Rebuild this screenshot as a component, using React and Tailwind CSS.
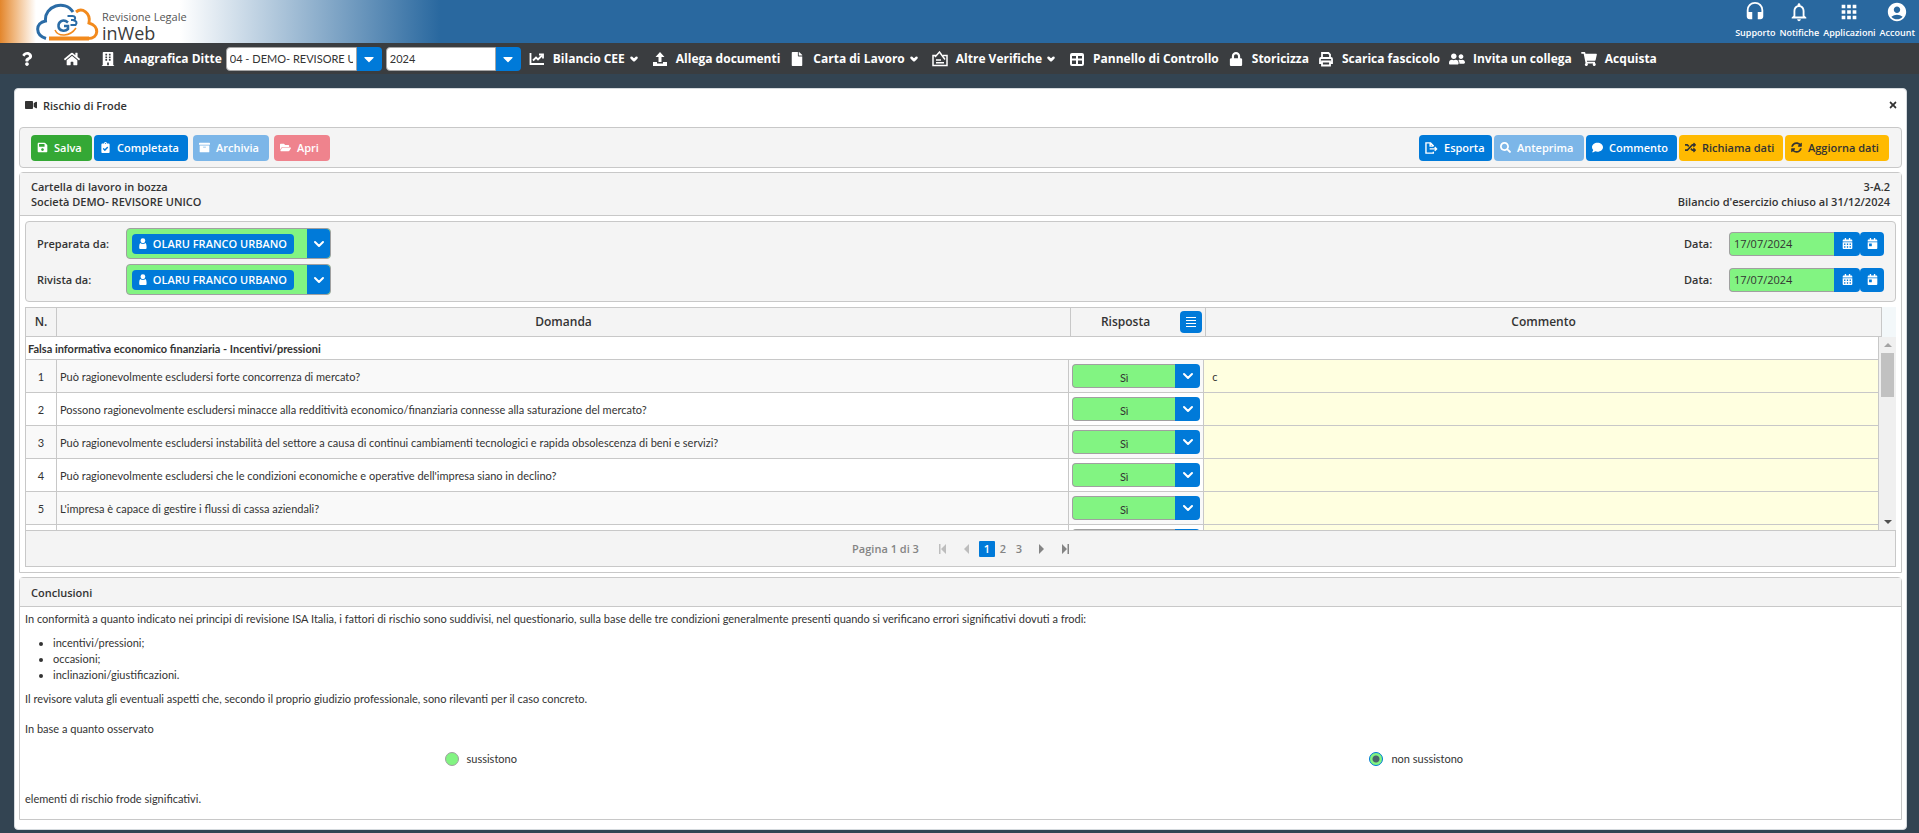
import { useState } from 'react';
import clsx from 'clsx';
import {
  FaArchive, FaBuilding, FaCalendarAlt, FaCalendarDay, FaCaretDown, FaClipboardCheck, FaComment, FaFile, FaFolderOpen,
  FaHome, FaLock, FaQuestion, FaRandom, FaSave, FaSearch, FaShoppingCart, FaSyncAlt, FaTimes, FaUserFriends, FaVideo,
} from 'react-icons/fa';
import { MdAccountCircle, MdApps, MdHeadset, MdNotificationsNone } from 'react-icons/md';
import { ChevronDown } from 'lucide-react';

const questions = [
  { n: 1, text: 'Può ragionevolmente escludersi forte concorrenza di mercato?', comment: 'c' },
  { n: 2, text: 'Possono ragionevolmente escludersi minacce alla redditività economico/finanziaria connesse alla saturazione del mercato?' },
  { n: 3, text: 'Può ragionevolmente escludersi instabilità del settore a causa di continui cambiamenti tecnologici e rapida obsolescenza di beni e servizi?' },
  { n: 4, text: "Può ragionevolmente escludersi che le condizioni economiche e operative dell'impresa siano in declino?" },
  { n: 5, text: "L'impresa è capace di gestire i flussi di cassa aziendali?" },
  { n: '', text: '' },
];

const Logo = () => (
  <svg viewBox="0 0 64 38" className="h-[38px] w-16" fill="none" strokeWidth="3">
    <path d="M10 35.500C-1 32 -1 20 9.500 18C8 3 29 -4 37 9" stroke="#2b6ca6" />
    <path d="M40 9C46 4 55 10 53 20C64 23 63 35.500 52 35.500" stroke="#f28a1d" />
    <path d="M13 35.500H53" stroke="#f28a1d" strokeWidth="4" />
    <path d="M19 27C22 34 34 34 40 25" stroke="#f28a1d" strokeWidth="1.500" />
    <path d="M32 19.500C27 15 22 19 22.500 23.500C23 28 29 29 32 26V23H28" stroke="#2b6ca6" strokeWidth="2.500" />
    <path d="M31.500 13H36.500Q40.500 13.500 38.500 17H35M37 17Q42.500 18.500 39.500 22H34.500" stroke="#2b6ca6" strokeWidth="2" />
  </svg>
);

const ChartIcon = ({ className }) => (
  <svg viewBox="0 0 16 16" className={className} fill="none" stroke="currentColor" strokeWidth="1.800">
    <path d="M1.500 2V13H15" />
    <path d="M4 9.500L7 6.500L9 8.500L13 4.500" />
    <path d="M10 3.500H14V7.500" />
  </svg>
);

const UploadIcon = ({ className }) => (
  <svg viewBox="0 0 16 16" className={className} fill="currentColor">
    <path d="M8 1L12.500 6H9.500V11H6.500V6H3.500Z" />
    <path d="M1 11H5V12.500H11V11H15V15H1Z" />
  </svg>
);

const BadgeIcon = ({ className }) => (
  <svg viewBox="0 0 16 16" className={className} fill="none" stroke="currentColor" strokeWidth="1.500">
    <path d="M4 4.500H1V14.500H15V4.500H11" />
    <path d="M3 6L7.500 1L13 8.500" />
    <path d="M4 9H9M4 11.800H12" />
  </svg>
);

const PanelIcon = ({ className }) => (
  <svg viewBox="0 0 16 16" className={className} fill="none" stroke="currentColor" strokeWidth="2">
    <rect x="2" y="3" width="12" height="11" rx="1" />
    <path d="M8 3V14M2 8.500H14M2 4H14" />
  </svg>
);

const PrintIcon = ({ className }) => (
  <svg viewBox="0 0 16 16" className={className} fill="none" stroke="currentColor" strokeWidth="1.800">
    <path d="M4 7V2H10.500L12 3.500V7" />
    <path d="M4 12H2V8Q2 7 3 7H13Q14 7 14 8V12H12" />
    <path d="M4 10.500H12V14.500H4Z" />
  </svg>
);

const ExportIcon = ({ className }) => (
  <svg viewBox="0 0 14 13" className={className} fill="none" stroke="currentColor" strokeWidth="1.500">
    <path d="M9 4.500V4L6 1H1V12H9V10.500M5.500 1V4.500H9" />
    <path d="M5 7.500H12.500M10.500 5.500L12.500 7.500L10.500 9.500" />
  </svg>
);

const PersonIcon = ({ className }) => (
  <svg viewBox="0 0 8 12" className={className} fill="currentColor">
    <circle cx="4" cy="3" r="2.600" />
    <path d="M1 5.500Q4 7.500 7 5.500Q8 7 8 9V11Q8 12 7 12H1Q0 12 0 11V9Q0 7 1 5.500Z" />
  </svg>
);

const BarsIcon = () => (
  <svg viewBox="0 0 12 10" className="h-2.5 w-3" fill="currentColor">
    <path d="M1 0H11V1H1ZM1 3H11V4H1ZM1 6H11V7H1ZM1 9H11V10H1Z" />
  </svg>
);

const NavItem = ({ icon: Icon, iconClass, children, menu }) => (
  <a href="#" className="flex shrink-0 items-center whitespace-nowrap">
    <Icon className={clsx('w-4 shrink-0', iconClass || 'h-4')} />
    <span className="ml-2">{children}</span>
    {menu && <ChevronDown className="mx-1 size-2.5" strokeWidth={6} />}
  </a>
);

const ToolButton = ({ icon: Icon, iconClass, className, children }) => (
  <button className={clsx('flex h-[26px] items-center gap-1.5 rounded-sm px-1.5 font-semibold whitespace-nowrap', className)}>
    <Icon className={clsx('shrink-0', iconClass || 'size-[11px]')} />
    {children}
  </button>
);

const HeaderLink = ({ icon: Icon, label }) => (
  <a href="#" className="flex flex-col items-center text-[9px] leading-3 font-semibold">
    <Icon className="mb-1 size-[22px]" />
    {label}
  </a>
);

const NavCombo = ({ label, value, className }) => (
  <div className={clsx('flex h-6 shrink-0', className)}>
    <input
      aria-label={label}
      defaultValue={value}
      className="w-0 flex-1 rounded-l-sm border border-[#a6a6a6] bg-white px-[3px] font-[Lato,sans-serif] text-[11px] font-normal text-[#333]"
    />
    <button aria-label={'Apri ' + label} className="flex w-[25px] items-center justify-center rounded-r-sm bg-[#007ad9]">
      <FaCaretDown className="size-4" />
    </button>
  </div>
);

const PersonRow = ({ id, label }) => (
  <div className="flex items-center">
    <label htmlFor={id} className="w-[89px] font-semibold">{label}</label>
    <div className="flex h-[31px] w-[205px] rounded-sm border border-[#a0a0a0] bg-[#82f482]">
      <div className="flex flex-1 items-center pl-[5px]">
        <span className="flex h-5 w-[162px] items-center gap-1.5 rounded-sm bg-[#007ad9] px-[7px] font-semibold whitespace-nowrap text-white">
          <PersonIcon className="h-[11px] w-2" />
          OLARU FRANCO URBANO
        </span>
      </div>
      <button id={id} className="flex w-[23px] items-center justify-center rounded-r-sm bg-[#007ad9] text-white">
        <ChevronDown className="size-4" strokeWidth={3} />
      </button>
    </div>
    <label htmlFor={id + '-data'} className="ml-auto w-[45px] font-semibold">Data:</label>
    <input
      id={id + '-data'}
      defaultValue="17/07/2024"
      className="h-6 w-[105px] rounded-l-sm border border-r-0 border-[#a0a0a0] bg-[#82f482] px-1"
    />
    <button aria-label="Calendario" className="flex h-6 w-[26px] items-center justify-center rounded-r-sm bg-[#007ad9] text-white">
      <FaCalendarAlt className="size-[11px]" />
    </button>
    <button aria-label="Oggi" className="flex size-6 items-center justify-center rounded-sm bg-[#007ad9] text-white">
      <FaCalendarDay className="size-[11px]" />
    </button>
  </div>
);

const PageArrow = ({ d, label, className }) => (
  <button aria-label={label} className={clsx('flex size-4 items-center justify-center', className)}>
    <svg viewBox="0 0 8 10" className="h-2.5 w-2" fill="currentColor"><path d={d} /></svg>
  </button>
);

const Radio = ({ name, label, checked, onChange }) => (
  <label className="flex items-center justify-center gap-2 pr-6">
    <input
      type="radio"
      name={name}
      checked={checked}
      onChange={onChange}
      className="size-3.5 appearance-none rounded-full border border-[#a0a0a0] bg-[#82f482] checked:border-[#007ad9] checked:bg-[radial-gradient(circle,#48646c_3px,#82f482_4px)]"
    />
    {label}
  </label>
);

export default function App() {
  const [page, setPage] = useState(1);
  const [esito, setEsito] = useState('non sussistono');

  return (
    <div className="flex min-h-screen flex-col bg-[#334452] pb-[3px] font-['Open_Sans','Noto_Sans',sans-serif] text-[11px] leading-[15px] text-[#333]">
      <header className="flex h-[43px] items-start bg-[linear-gradient(90deg,#e3862c_0px,#f0b67c_14px,#ffffff_36px,#ffffff_180px,#29689f_440px)] pr-1">
        <a href="#" aria-label="Revisione Legale inWeb" className="ml-9 flex pt-[3px]">
          <Logo />
          <span className="ml-0.5 flex flex-col pt-1.5">
            <span className="text-[11px] leading-4 text-[#555]">Revisione Legale</span>
            <span className="text-lg leading-4 font-medium text-[#3c3c3c]">inWeb</span>
          </span>
        </a>
        <nav className="ml-auto flex gap-1 pt-px text-white">
          <HeaderLink icon={MdHeadset} label="Supporto" />
          <HeaderLink icon={MdNotificationsNone} label="Notifiche" />
          <HeaderLink icon={MdApps} label="Applicazioni" />
          <HeaderLink icon={MdAccountCircle} label="Account" />
        </nav>
      </header>

      <nav className="flex h-[31px] items-center bg-[#3a3d40] pt-px pl-5 text-xs font-bold text-white">
        <a href="#" aria-label="Aiuto" className="w-11"><FaQuestion className="size-3.5" /></a>
        <a href="#" aria-label="Home" className="w-9"><FaHome className="size-4" /></a>
        <NavItem icon={FaBuilding} iconClass="h-3.5">Anagrafica Ditte</NavItem>
        <NavCombo label="Ditta" value="04 - DEMO- REVISORE UNICO" className="ml-1 w-[156px]" />
        <NavCombo label="Anno" value="2024" className="ml-1 w-[135px]" />
        <div className="ml-2 flex gap-[9px]">
          <NavItem icon={ChartIcon} menu>Bilancio CEE</NavItem>
          <NavItem icon={UploadIcon}>Allega documenti</NavItem>
          <NavItem icon={FaFile} iconClass="h-3.5" menu>Carta di Lavoro</NavItem>
          <NavItem icon={BadgeIcon} menu>Altre Verifiche</NavItem>
          <NavItem icon={PanelIcon}>Pannello di Controllo</NavItem>
          <NavItem icon={FaLock} iconClass="h-3.5">Storicizza</NavItem>
          <NavItem icon={PrintIcon}>Scarica fascicolo</NavItem>
          <NavItem icon={FaUserFriends}>Invita un collega</NavItem>
          <NavItem icon={FaShoppingCart} iconClass="h-3.5">Acquista</NavItem>
        </div>
      </nav>

      <main className="mt-3.5 mr-3 ml-3.5 flex flex-1 flex-col rounded-sm border border-[#d5dade] bg-white px-1 pb-[9px]">
        <div className="flex h-[38px] items-center pr-1 pb-1.5 pl-1.5 font-semibold">
          <FaVideo className="mr-1.5 size-3" />
          Rischio di Frode
          <button aria-label="Chiudi" className="ml-auto"><FaTimes className="size-2.5" /></button>
        </div>

        <div className="flex h-[41px] items-center rounded-sm border border-[#c8c8c8] bg-[#f4f4f4] pr-3 pl-[11px]">
          <ToolButton icon={FaSave} className="w-[61px] bg-[#34a835] text-white">Salva</ToolButton>
          <ToolButton icon={FaClipboardCheck} className="ml-0.5 w-[94px] bg-[#007ad9] text-white">Completata</ToolButton>
          <ToolButton icon={FaArchive} className="ml-[5px] w-[76px] bg-[#7cb6e8] text-white">Archivia</ToolButton>
          <ToolButton icon={FaFolderOpen} className="ml-[5px] w-14 bg-[#ef838d] text-white">Apri</ToolButton>
          <div className="ml-auto flex gap-0.5">
            <ToolButton icon={ExportIcon} iconClass="h-3 w-[13px]" className="w-[73px] gap-1 bg-[#007ad9] text-white">Esporta</ToolButton>
            <ToolButton icon={FaSearch} className="w-[90px] bg-[#7cb6e8] text-white">Anteprima</ToolButton>
            <ToolButton icon={FaComment} className="w-[91px] bg-[#007ad9] text-white">Commento</ToolButton>
            <ToolButton icon={FaRandom} className="w-[104px] bg-[#ffba01]">Richiama dati</ToolButton>
            <ToolButton icon={FaSyncAlt} className="w-[104px] bg-[#ffba01]">Aggiorna dati</ToolButton>
          </div>
        </div>

        <section className="mt-1 rounded-t-sm border border-[#c8c8c8]">
          <div className="flex h-[43px] items-center justify-between border-b border-[#c8c8c8] bg-[#f4f4f4] px-[11px] font-semibold">
            <div>Cartella di lavoro in bozza<br />Società DEMO- REVISORE UNICO</div>
            <div className="text-right">3-A.2<br />Bilancio d'esercizio chiuso al 31/12/2024</div>
          </div>

          <div className="p-[5px]">
            <div className="flex flex-col gap-[5px] rounded-sm border border-[#c8c8c8] bg-[#f4f4f4] px-[11px] py-1.5">
              <PersonRow id="preparata" label="Preparata da:" />
              <PersonRow id="rivista" label="Rivista da:" />
            </div>

            <div className="mt-[5px] bg-[#f3f8fa] pr-3.5">
              <table className="w-full table-fixed border-separate border-spacing-0 bg-[#f4f4f4] text-xs">
                <thead>
                  <tr className="h-[30px]">
                    <th className="w-8 border border-[#c8c8c8] font-semibold">N.</th>
                    <th className="border-y border-r border-[#c8c8c8] font-semibold">Domanda</th>
                    <th className="w-[135px] border-y border-r border-[#c8c8c8] p-0 pr-[3px] font-semibold">
                      <div className="flex items-center">
                        <span className="flex-1">Risposta</span>
                        <button aria-label="Menu risposte" className="flex size-[22px] items-center justify-center rounded-sm bg-[#007ad9] text-white">
                          <BarsIcon />
                        </button>
                      </div>
                    </th>
                    <th className="w-[36.4%] border-y border-r border-[#c8c8c8] font-semibold">Commento</th>
                  </tr>
                </thead>
              </table>
            </div>

            <div className="flex h-[193px] overflow-hidden">
              <div className="flex-1">
                <table className="w-full table-fixed border-separate border-spacing-0 font-[Lato,sans-serif]">
                  <colgroup>
                    <col className="w-8" />
                    <col />
                    <col className="w-[135px]" />
                    <col className="w-[36.4%]" />
                  </colgroup>
                  <tbody>
                    <tr className="h-[23px]">
                      <td colSpan={4} className="border-x border-b border-[#c8c8c8] px-0.5 font-bold">
                        Falsa informativa economico finanziaria - Incentivi/pressioni
                      </td>
                    </tr>
                    {questions.map((q, i) => (
                      <tr key={i} className="h-[33px] odd:bg-white even:bg-[#f9f9f9]">
                        <td className="border-x border-b border-[#c8c8c8] text-center">{q.n}</td>
                        <td className="truncate border-r border-b border-[#c8c8c8] px-[3px]">{q.text}</td>
                        <td className="border-r border-b border-[#c8c8c8] p-0 pl-[3px]">
                          <div className="flex h-6 w-32">
                            <select
                              aria-label={'Risposta ' + (i + 1)}
                              className="w-[103px] appearance-none rounded-l-sm border border-r-0 border-[#a0a0a0] bg-[#82f482] pt-0.5 text-center [text-align-last:center]"
                            >
                              <option>Sì</option>
                              <option>No</option>
                            </select>
                            <span className="flex flex-1 items-center justify-center rounded-r-sm bg-[#007ad9] text-white">
                              <ChevronDown className="size-4" strokeWidth={3} />
                            </span>
                          </div>
                        </td>
                        <td className="border-r border-b border-[#c8c8c8] bg-[#ffffe0] p-0">
                          <input aria-label={'Commento ' + (i + 1)} defaultValue={q.comment} className="h-8 w-full px-2" />
                        </td>
                      </tr>
                    ))}
                  </tbody>
                </table>
              </div>
              <div className="flex w-[17px] flex-col items-center bg-[#f0f0f0]">
                <svg viewBox="0 0 8 4" className="mt-1.5 mb-1.5 h-1 w-2" fill="#a3a3a3"><path d="M0 4L4 0L8 4Z" /></svg>
                <div className="h-11 w-[13px] bg-[#c1c1c1]" />
                <svg viewBox="0 0 8 4" className="mt-auto mb-1.5 h-1 w-2" fill="#505050"><path d="M0 0L4 4L8 0Z" /></svg>
              </div>
            </div>

            <div className="flex h-[37px] items-center justify-center border border-[#c8c8c8] bg-[#f4f4f4] pl-1 font-semibold text-[#848484]">
              <span className="mr-4">Pagina {page} di 3</span>
              <PageArrow label="Prima pagina" className="text-[#bdbdbd]" d="M0 0H1.500V10H0ZM7 0V10L2 5Z" />
              <PageArrow label="Pagina precedente" className="mr-1 ml-2 text-[#bdbdbd]" d="M6 0V10L1 5Z" />
              {[1, 2, 3].map((p) => (
                <button
                  key={p}
                  onClick={() => setPage(p)}
                  className={clsx('size-4 rounded-[1px]', p === page && 'bg-[#007ad9] text-white')}
                >
                  {p}
                </button>
              ))}
              <PageArrow label="Pagina successiva" className="mr-2 ml-1.5" d="M2 0V10L7 5Z" />
              <PageArrow label="Ultima pagina" d="M6.500 0H8V10H6.500ZM1 0V10L6 5Z" />
            </div>
          </div>
        </section>

        <section className="mt-1 flex-1 rounded-t-sm border border-[#c8c8c8]">
          <h2 className="flex h-[29px] items-center border-b border-[#c8c8c8] bg-[#f4f4f4] px-[11px] font-semibold">Conclusioni</h2>
          <div className="px-[5px] pt-1 font-[Lato,sans-serif] leading-4">
            <p>
              In conformità a quanto indicato nei principi di revisione ISA Italia, i fattori di rischio sono suddivisi, nel
              questionario, sulla base delle tre condizioni generalmente presenti quando si verificano errori significativi dovuti a frodi:
            </p>
            <ul className="my-2 list-disc pl-7">
              <li>incentivi/pressioni;</li>
              <li>occasioni;</li>
              <li>inclinazioni/giustificazioni.</li>
            </ul>
            <p>Il revisore valuta gli eventuali aspetti che, secondo il proprio giudizio professionale, sono rilevanti per il caso concreto.</p>
            <p className="mt-3.5">In base a quanto osservato</p>
            <div className="mt-3.5 grid grid-cols-2">
              {['sussistono', 'non sussistono'].map((v) => (
                <Radio key={v} name="esito" label={v} checked={esito === v} onChange={() => setEsito(v)} />
              ))}
            </div>
            <p className="mt-6">elementi di rischio frode significativi.</p>
          </div>
        </section>
      </main>
    </div>
  );
}
